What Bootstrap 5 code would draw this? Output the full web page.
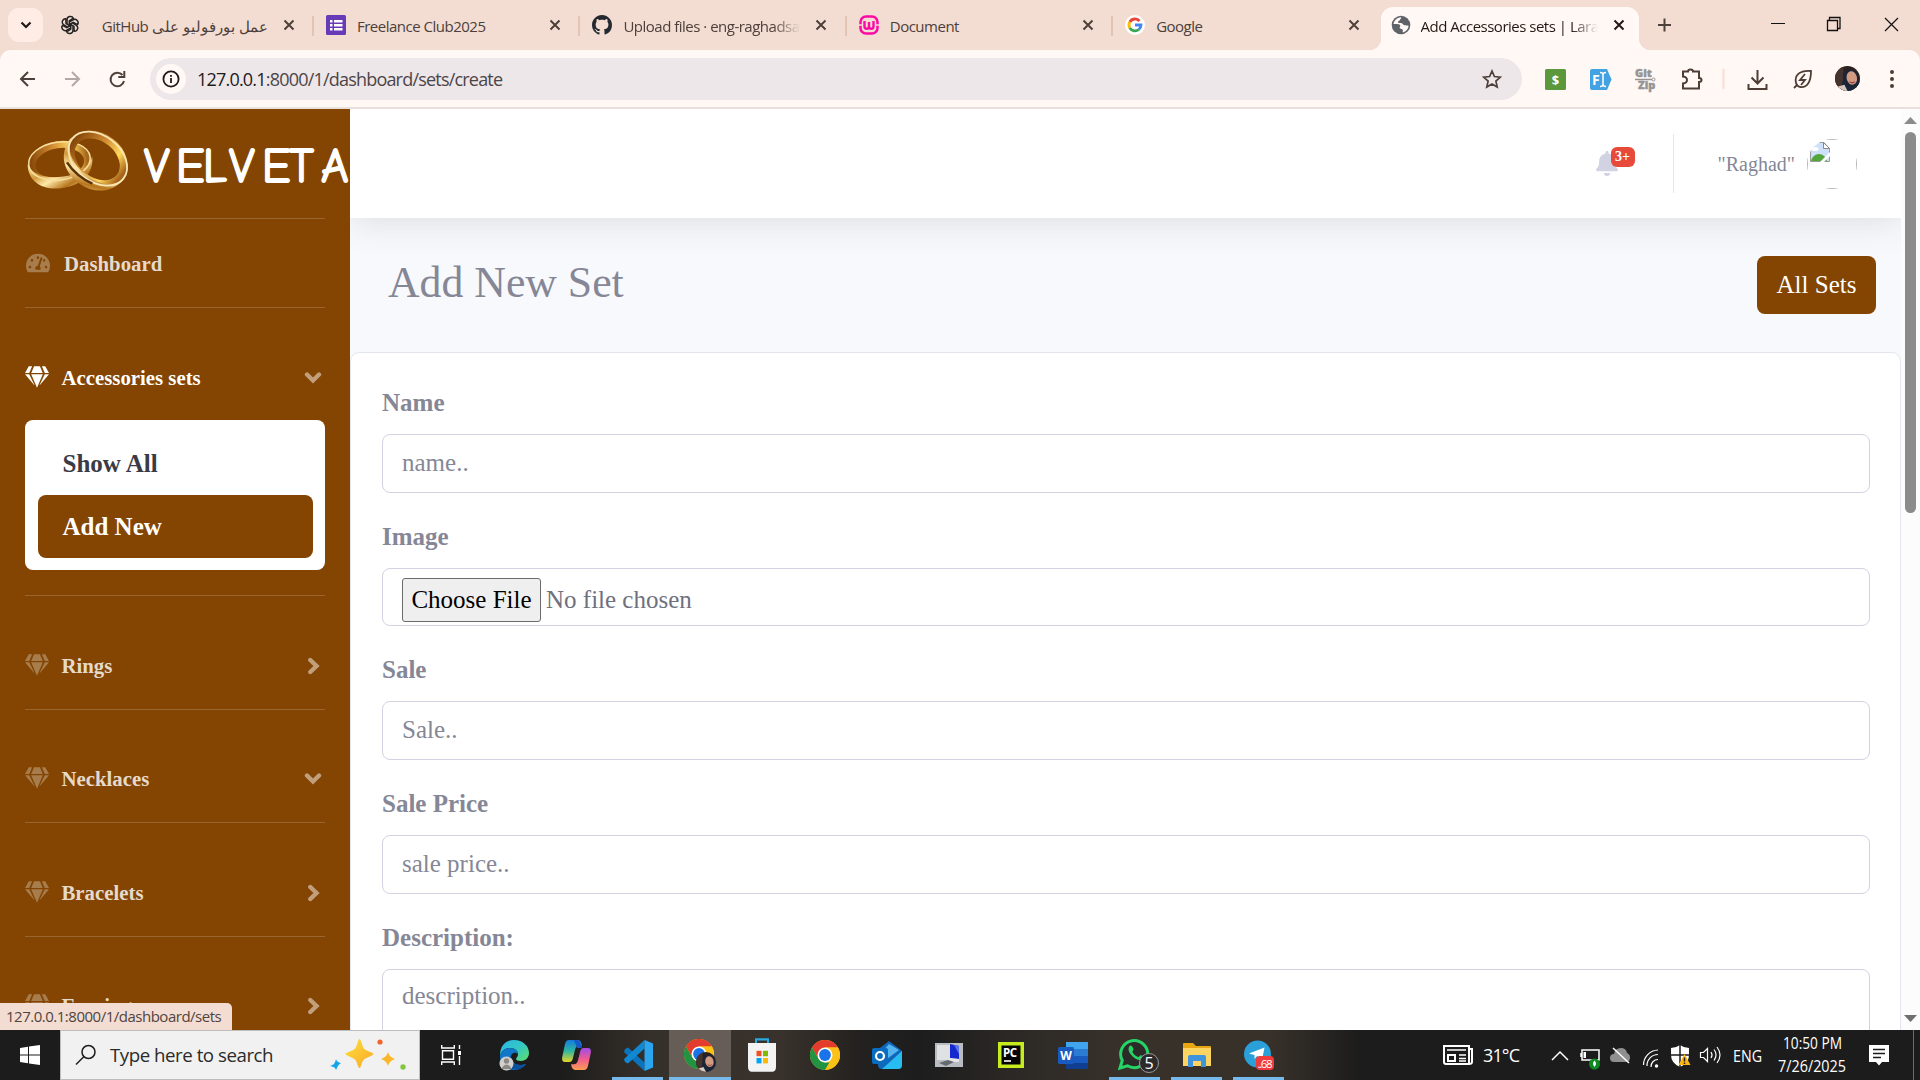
<!DOCTYPE html>
<html lang="en">
<head>
<meta charset="utf-8">
<title>Add Accessories sets | Laravel</title>
<link href="https://cdn.jsdelivr.net/npm/bootstrap@5.3.0/dist/css/bootstrap.min.css" rel="stylesheet">
<style>
:root{--brown:#834501;--ui:"Segoe UI","Open Sans","Noto Sans",sans-serif}
html,body{height:1080px;width:1920px;overflow:hidden}
body{font-family:"Times New Roman","Liberation Serif",serif;font-size:20px;color:#858796;display:flex;flex-direction:column;margin:0}
svg{display:block;flex:none}
.ui{font-family:var(--ui)}
/* browser tabs */
.tabstrip{height:50px;background:#f3ddd2;flex:none;color:#4d403a;font-size:15px;letter-spacing:-.5px}
.tabdrop{width:35px;height:34px;margin:8px 14px 0 8px;border-radius:11px;background:#ffece4}
.btab{width:266.4px;height:50px;padding-left:14px}
.btab .ttl{width:177px;margin-left:11px;white-space:nowrap;overflow:hidden;line-height:22px;padding-top:1px}
.btab .cls{margin-left:15px}
.sep{width:2px;height:20px;background:#e3c4b4;margin-right:-2px}
.fade-r{-webkit-mask-image:linear-gradient(90deg,#000 85%,transparent);mask-image:linear-gradient(90deg,#000 85%,transparent)}
.btab.cur{width:258px;height:43px;background:#fff8f5;border-radius:12px 12px 0 0;margin:7px 0 0 3px;padding-left:10px;color:#241a15;position:relative}
.btab.cur:before,.btab.cur:after{content:"";position:absolute;bottom:0;width:12px;height:12px}
.btab.cur:before{left:-12px;background:radial-gradient(circle at 0 0,transparent 12px,#fff8f5 12.5px)}
.btab.cur:after{right:-12px;background:radial-gradient(circle at 100% 0,transparent 12px,#fff8f5 12.5px)}
.toolbar-wrap{height:59px;background:#f3ddd2;flex:none}
.urlbar{height:59px;background:#fff8f5;border-radius:11px 11px 0 0;border-bottom:2px solid #e9dfdc}
.omni{width:1372px;height:42px;border-radius:21px;background:#ede7e9;padding:0 18px 0 6px;margin-top:1px;font-size:18px;letter-spacing:-.8px;color:#4c4547}
.omni b{font-weight:400;color:#1f1b1c}
.infodot{width:30px;height:30px;border-radius:50%;background:#fff8f5;margin-right:11px}
/* page */
.page{height:921px;flex:none;overflow:hidden;background:#f8f9fc}
.side{width:350px;flex:none;background:var(--brown);overflow:hidden;height:921px}
.brandbox{height:109px}
.rule{height:1px;margin:0 25px;background:#99662f}
.sitem{margin:0 25px;font-weight:700;color:#e6dacc;line-height:30px;height:112.6px;padding-top:54.5px;font-size:20.8px}
.sitem.dash{height:88px;padding-top:30px}
.sitem.on{color:#fff;height:112px}
.sitem svg.ic{color:#a87d4e;width:24px;height:22px;margin-right:12.5px;margin-top:3px}
.sitem.on svg.ic{color:#fff}
.sitem svg.chev{color:#c19f7c;margin:6px 3.5px 0 auto}
.subbox{margin:0 25px 25px;height:150px;background:#fff;border-radius:8px;padding:12px 12px 12px 13px;font-size:25px;font-weight:700}
.subbox .sublink{display:block;height:63px;line-height:63px;padding-left:24.5px;border-radius:8px;text-decoration:none;color:#3a3b45}
.subbox .sublink.on{background:var(--brown);color:#fff}
.topline{height:109px;background:#fff;box-shadow:0 3px 35px rgba(58,59,69,.15);flex:none;position:relative;z-index:1}
.main{width:1551px;overflow:hidden;height:921px}
.vline{width:1px;height:59px;background:#e3e6f0}
.cnt{position:absolute;left:15px;top:-4px;width:24px;height:20px;border-radius:6px;background:#e74a3b;color:#fff;font-size:14px;font-weight:700;line-height:19px;text-align:center}
.headrow{height:134px;padding:38px 25px 0 38px;flex:none}
.headrow h1{font-size:43.75px;line-height:52px;font-weight:400;margin:0}
.allbtn{width:119px;height:58px;border-radius:8px;background:var(--brown);color:#fff;font-size:25px;line-height:58px;text-align:center}
.fcard{background:#fff;border:1px solid #e3e6f0;border-radius:9px;height:760px;padding:31px 30px 0 31px;flex:none}
.fgroup{height:134px}
.fgroup.short{height:133px}
.fgroup label{display:block;font-size:25px;font-weight:700;line-height:37.5px;margin-bottom:12.5px}
.fgroup .form-control{height:59px;font-size:25px;line-height:37.5px;padding:7px 19px 9px;border:1px solid #d1d3e2;border-radius:8px;color:#6e707e;font-family:inherit}
.fgroup textarea.form-control{height:98px;resize:none;overflow:hidden}
.fgroup .form-control::placeholder{color:#858796}
.fgroup .filebox{height:58px;padding:9px 19px 0}
.pick{width:139px;height:44px;border:1px solid #6b6b6b;border-radius:3px;background:#efefef;color:#000;line-height:42px;text-align:center;margin-right:5px}
.sbar{width:19px;background:#fcfcfc;height:921px;padding:8px 0 8px}
.thumb{width:11px;height:381px;border-radius:6px;background:#8b8b8b;margin-top:8px}
.bubble{position:absolute;left:0;top:1003px;width:232px;height:27px;background:#f3ddd2;border-radius:0 5px 0 0;color:#50443f;font-size:15px;line-height:27px;padding-left:6px;letter-spacing:-.49px;z-index:5;white-space:nowrap}
/* taskbar */
.taskbar{height:50px;flex:none;color:#fff;background:linear-gradient(90deg,#1c1c1c 0,#1c1c1c 560px,#36302a 650px,#39322c 780px,#23211f 860px,#1d1d1e 920px,#2b2825 1010px,#38312a 1120px,#38312a 1270px,#1c1c1c 1360px)}
.start{width:60px}
.find{width:360px;height:50px;background:#f1f1f1;border:1px solid #bdbdbd;color:#2b2b2b;font-size:18.7px;letter-spacing:-.47px;padding-left:14px}
.slot{width:62.1px;height:50px;display:flex;align-items:center;justify-content:center;position:relative}
.slot.live:after{content:"";position:absolute;bottom:0;left:5px;right:6px;height:3px;background:#76b9ed}
.slot.cur{background:#655d56}
.slot.cur:after{left:0;right:0}
</style>
<script src="https://cdn.jsdelivr.net/npm/bootstrap@5.3.0/dist/js/bootstrap.bundle.min.js"></script>
</head>
<body>
<svg width="0" height="0" style="position:absolute">
<defs>
<symbol id="gem" viewBox="0 0 576 512"><path fill="currentColor" d="M485.5 0L576 160H474.9L405.7 0h79.8zm-128 0l69.2 160H149.3L218.5 0h139zm-267 0h79.8l-69.2 160H0L90.5 0zM0 192h100.7l123 251.7c1.5 3.1-2.7 5.9-5 3.3L0 192zm148.2 0h279.6l-137 318.2c-1 2.4-4.5 2.4-5.5 0L148.2 192zm204.1 251.7l123-251.7H576L357.3 446.9c-2.3 2.7-6.5-.1-5-3.2z"/></symbol>
<symbol id="cx" viewBox="0 0 12 12"><path d="M1.500 1.500l9 9M10.500 1.500l-9 9" stroke="currentColor" stroke-width="2" fill="none"/></symbol>
<symbol id="cr" viewBox="0 0 18 18"><path d="M6.300 3L12.500 9l-6.200 6" stroke="currentColor" stroke-width="4.400" stroke-linecap="round" fill="none"/></symbol>
<symbol id="cd" viewBox="0 0 18 18"><path d="M3 5.500L9 11.500l6-6" stroke="currentColor" stroke-width="4.400" stroke-linecap="round" fill="none"/></symbol>
<symbol id="chrome" viewBox="0 0 30 30"><circle cx="15" cy="15" r="15" fill="#fbc116"/><path d="M15 15L8.500 18.800 2 7.500A15 15 0 0 1 28 7.500H15z" fill="#e33b2e"/><path d="M2 7.500L8.500 18.700 15 22.500h6.500L15 30A15 15 0 0 1 2 7.500z" fill="#229342"/><path d="M15 30l6.500-11.300L15 15V7.500h13A15 15 0 0 1 15 30z" fill="#fbc116"/><circle cx="15" cy="15" r="7.500" fill="#fff"/><circle cx="15" cy="15" r="5.900" fill="#1a73e8"/></symbol>
<symbol id="face" viewBox="0 0 24 24"><clipPath id="fc"><circle cx="12" cy="12" r="12"/></clipPath><g clip-path="url(#fc)"><path fill="#2c211e" d="M0 0h24v24H0z"/><path fill="#45342d" d="M0 0h8v24H0z"/><path d="M8 8c1-6 11-7 14 1 2 6 3 12 0 15H3c3-3 5-8 5-16z" fill="#1b2538"/><ellipse cx="16" cy="11.500" rx="5" ry="6.500" fill="#d39a82" transform="rotate(-12 16 11)"/><path d="M14 15c2 2 4 1 5 0" stroke="#8d3b3b" fill="none"/><path d="M2 20l7-2 3 6H1z" fill="#d8c9bf"/></g></symbol>
<linearGradient id="gold" x1="0" y1="0" x2="1" y2="1"><stop offset="0" stop-color="#fbe9a6"/><stop offset=".3" stop-color="#d39a3c"/><stop offset=".5" stop-color="#ffe9a8"/><stop offset=".75" stop-color="#b8761d"/><stop offset="1" stop-color="#f7df98"/></linearGradient>
<linearGradient id="goldin" x1="0" y1="0" x2="1" y2="0"><stop offset="0" stop-color="#8a4a0a"/><stop offset=".4" stop-color="#d08a32"/><stop offset=".75" stop-color="#ffd85c"/><stop offset="1" stop-color="#a8641a"/></linearGradient>
<linearGradient id="star" x1="0" y1="0" x2="1" y2="1"><stop offset="0" stop-color="#ffdf3d"/><stop offset="1" stop-color="#f7a928"/></linearGradient>
<linearGradient id="edg" x1="0" y1="0" x2="1" y2="1"><stop offset="0" stop-color="#2bb5e8"/><stop offset=".5" stop-color="#33c8c4"/><stop offset="1" stop-color="#62de68"/></linearGradient>
<linearGradient id="cpA" x1="0" y1="0" x2="0" y2="1"><stop offset="0" stop-color="#147be0"/><stop offset=".5" stop-color="#2fb6a0"/><stop offset="1" stop-color="#e8d327"/></linearGradient>
<linearGradient id="cpB" x1="0" y1="0" x2="0" y2="1"><stop offset="0" stop-color="#a14bea"/><stop offset=".5" stop-color="#ef5c8f"/><stop offset="1" stop-color="#fb9d52"/></linearGradient>
</defs>
</svg>

<header class="ui">
<div class="tabstrip d-flex align-items-start">
  <div class="tabdrop d-flex align-items-center justify-content-center"><svg width="12" height="8" viewBox="0 0 12 8"><path d="M1.500 1.500L6 6l4.500-4.500" stroke="#1f1a18" stroke-width="2.200" fill="none"/></svg></div>
  <div class="btab d-flex align-items-center" style="width:255px;padding-left:4px">
    <svg width="18" height="20" viewBox="-12 -13 24 26" fill="none" stroke="#222" stroke-width="2"><g id="oa"><path d="M-4 -1.500V-7a4.500 4.500 0 0 1 8.500-2L-1 -5.500V1"/></g><use href="#oa" transform="rotate(60)"/><use href="#oa" transform="rotate(120)"/><use href="#oa" transform="rotate(180)"/><use href="#oa" transform="rotate(240)"/><use href="#oa" transform="rotate(300)"/></svg>
    <span class="ttl" dir="rtl" style="width:163px;margin-left:26px;overflow:visible">عمل بورفوليو على GitHub</span>
    <svg class="cls" width="12" height="12"><use href="#cx"/></svg>
  </div>
  <i class="sep mt-3"></i>
  <div class="btab d-flex align-items-center">
    <svg width="20" height="20" viewBox="0 0 20 20"><rect width="20" height="20" rx="1.500" fill="#673ab7"/><path d="M4 5h2.500v2.500H4zM8 5h8.500v2.500H8zM4 9h2.500v2.500H4zM8 9h8.500v2.500H8zM4 13h2.500v2.500H4zM8 13h8.500v2.500H8z" fill="#fff"/></svg>
    <span class="ttl">Freelance Club2025</span><svg class="cls" width="12" height="12"><use href="#cx"/></svg>
  </div>
  <i class="sep mt-3"></i>
  <div class="btab d-flex align-items-center">
    <svg width="20" height="20" viewBox="0 0 16 16"><path fill="#24292f" d="M8 0C3.580 0 0 3.580 0 8c0 3.540 2.290 6.530 5.470 7.590.4.070.55-.17.55-.38 0-.19-.01-.82-.01-1.490-2.010.37-2.530-.49-2.690-.94-.09-.23-.48-.94-.82-1.130-.28-.15-.68-.52-.01-.53.63-.01 1.080.58 1.230.82.72 1.210 1.870.87 2.330.66.07-.52.28-.87.51-1.070-1.780-.2-3.640-.89-3.640-3.950 0-.87.31-1.590.82-2.150-.08-.2-.36-1.020.08-2.120 0 0 .67-.21 2.200.82.64-.18 1.320-.27 2-.27s1.360.09 2 .27c1.530-1.040 2.200-.82 2.200-.82.44 1.100.16 1.920.08 2.120.51.56.82 1.270.82 2.150 0 3.070-1.870 3.750-3.650 3.950.29.25.54.73.54 1.480 0 1.070-.01 1.930-.01 2.200 0 .21.15.46.55.38A8.010 8.010 0 0 0 16 8c0-4.420-3.580-8-8-8"/></svg>
    <span class="ttl fade-r">Upload files · eng-raghadsa</span><svg class="cls" width="12" height="12"><use href="#cx"/></svg>
  </div>
  <i class="sep mt-3"></i>
  <div class="btab d-flex align-items-center">
    <svg width="20" height="20" viewBox="0 0 20 20" fill="none" stroke="#fb0ba4"><rect x="1.500" y="1.500" width="17" height="17" rx="5.500" stroke-width="2.500"/><path d="M5.500 6v5.500a2.200 2.200 0 0 0 4.500 0V7M10 11.500a2.200 2.200 0 0 0 4.500 0V6" stroke-width="2.400"/><path d="M0 10h3M17 10h3" stroke="#f3ddd2" stroke-width="1.500"/></svg>
    <span class="ttl">Document</span><svg class="cls" width="12" height="12"><use href="#cx"/></svg>
  </div>
  <i class="sep mt-3"></i>
  <div class="btab d-flex align-items-center">
    <svg width="20" height="20" viewBox="0 0 20 20" fill="none" stroke-width="2.800"><circle cx="10" cy="10" r="10" fill="#fff"/><path d="M14.500 6A6 6 0 0 0 4.800 7" stroke="#ea4335"/><path d="M4.800 7a6 6 0 0 0 0 6" stroke="#fbbc05"/><path d="M4.800 13a6 6 0 0 0 9 1.500" stroke="#34a853"/><path d="M13.800 14.500A6 6 0 0 0 16 10h-6" stroke="#4285f4"/></svg>
    <span class="ttl">Google</span><svg class="cls" width="12" height="12"><use href="#cx"/></svg>
  </div>
  <div class="btab cur d-flex align-items-center">
    <svg width="20" height="20" viewBox="0 0 20 20" style="margin-top:-7px"><circle cx="10" cy="10" r="9.300" fill="#5f6368"/><path d="M2.500 9c.5-3.500 3.500-6.500 7.500-6.800 1 1-.8 1.600-1.200 2.800-.3 1.200-1.800.7-1.800 2s1.500 1 3 1 1.500 1.500 3 2 4 .3 4.500.8c0 3.200-2.500 6-5.500 6.700-1-.8.500-2-.5-3s-2.500-.5-2.800-1.700c-.3-1.300 1.300-1.500.3-2.800S5 9.500 2.500 9z" fill="#fff8f5"/></svg>
    <span class="ttl fade-r" style="margin-left:10px;margin-top:-7px">Add Accessories sets | Lara</span><svg class="cls" style="margin-top:-7px" width="12" height="12"><use href="#cx"/></svg>
  </div>
  <svg width="281" height="50" viewBox="1639 0 281 50" fill="none" stroke="#4d403a"><path d="M1658 25h13M1664.500 18.500v13" stroke-width="2"/><path d="M1771 23.500h14" stroke="#111"/><path d="M1827.500 20.500h10v10h-10zM1829.500 20v-2.500h10.500v11H1838" stroke="#111" stroke-width="1.300"/><path d="M1885 18l13 13M1898 18l-13 13" stroke="#111" stroke-width="1.200"/></svg>
</div>
<div class="toolbar-wrap"><div class="urlbar d-flex align-items-center">
  <svg width="150" height="42" viewBox="0 58 150 42" fill="none" stroke="#4d403a" stroke-width="2"><path d="M35 79H21M28 72l-7 7 7 7"/><path d="M65 79h14M72 72l7 7-7 7" stroke="#b3a9a4"/><path d="M122.500 75A6.800 6.800 0 1 0 124 81M124.300 71v6h-6"/></svg>
  <div class="omni d-flex align-items-center">
    <div class="infodot d-flex align-items-center justify-content-center"><svg width="18" height="18" viewBox="0 0 18 18" fill="none" stroke="#1f1b1c" stroke-width="1.800"><circle cx="9" cy="9" r="7.600"/><path d="M9 8v5M9 5v1.800"/></svg></div>
    <span class="flex-grow-1"><b>127.0.0.1</b>:8000/1/dashboard/sets/create</span>
    <svg width="20" height="20" viewBox="0 0 20 20" style="margin-right:2px"><path d="M10 2l2.400 5.500 6 .6-4.500 4 1.300 5.900L10 14.900 4.800 18l1.300-5.900-4.500-4 6-.6z" fill="none" stroke="#4d403a" stroke-width="1.700"/></svg>
  </div>
  <svg width="398" height="42" viewBox="1522 58 398 42" font-family="Open Sans,sans-serif">
    <rect x="1545" y="69" width="21" height="21" rx="1.500" fill="#5b983b"/><text x="1555.500" y="84.500" font-size="13" font-weight="700" fill="#fff" text-anchor="middle">$</text>
    <path d="M1592 69h15l4.500 10.500-4.500 10.500h-15q-2 0-2-2V71q0-2 2-2z" fill="#42a2e2"/><text x="1592" y="85" font-size="14" font-weight="700" fill="#fff">F</text><path d="M1600 72.500q3 0 3 2 0-2 3-2M1603 74v11M1600 86.500q3 0 3-2 0 2 3 2" stroke="#fff" stroke-width="1.500" fill="none"/>
    <g font-size="11" font-weight="800" fill="#949494" stroke="#949494" stroke-width=".4"><text x="1635" y="77">Git</text><text x="1638" y="89">Zip</text></g><path d="M1635 79.500h17" stroke="#949494" stroke-width="1.500"/><circle cx="1653.500" cy="79.500" r="1.500" fill="none" stroke="#949494"/>
    <path d="M1683 71.500h5q0-2 2.500-2t2.500 2h6v6.500q2.500 0 2.500 2t-2.500 2v6.500h-16v-5q4-.5 4-3.500t-4-3.500z" fill="none" stroke="#4d3d34" stroke-width="2"/>
    <path d="M1723.500 69v20" stroke="#fadcd0" stroke-width="2"/>
    <path d="M1757.500 70v13M1751.500 77.500l6 6 6-6M1748.500 84v5h18v-5" fill="none" stroke="#4d3d34" stroke-width="2"/>
    <path d="M1794 88l3-3M1796 83c-2-8 4-13 15-12 0 11-4 17-11 16-3-1-3.500-2-4-4zM1805 74l-5 6h5l-4 5" fill="none" stroke="#4d3d34" stroke-width="1.800"/>
    <use href="#face" x="1835" y="66" width="25" height="25"/>
    <g fill="#4d3d34"><circle cx="1892" cy="72" r="2"/><circle cx="1892" cy="79" r="2"/><circle cx="1892" cy="86" r="2"/></g>
  </svg>
</div></div>
</header>

<div class="page d-flex">
<nav class="side">
  <div class="brandbox"><svg width="350" height="109" viewBox="0 109 350 109">
    <g fill="none">
      <g transform="rotate(-8 60 165)"><ellipse cx="60" cy="163" rx="28" ry="18.500" stroke="url(#goldin)" stroke-width="7"/><path d="M28 160c-2 19 14 29 33 28 18 0 32-11 32-27-3 9-14 16-31 16-17 0-31-6-34-17z" fill="url(#gold)"/><ellipse cx="60" cy="161" rx="31" ry="19" stroke="#f6e0a0" stroke-width="1.500"/></g>
      <g transform="rotate(38 96 161)"><ellipse cx="96" cy="159" rx="29" ry="22" stroke="url(#goldin)" stroke-width="8"/><path d="M62 157c-1 21 15 33 35 32 19-1 32-14 32-31-3 12-15 20-32 20-18 0-32-8-35-21z" fill="url(#gold)"/><ellipse cx="96" cy="158" rx="32.500" ry="23" stroke="#f8e7b4" stroke-width="1.800"/><path d="M74 180c12 4 22 4 33 1" stroke="#5b3308" stroke-width="2.500"/></g>
    </g>
    <text y="182" x="144 176 203 229 262 289 321" font-family="'Comic Sans MS','Comic Neue',Lato,sans-serif" font-size="47.500" fill="#fff" stroke="#fff" stroke-width="1.800" stroke-linejoin="round">VELVETA</text>
  </svg></div>
  <div class="rule"></div>
  <div class="sitem dash d-flex"><svg class="ic" style="margin-right:14px;margin-left:1px;margin-top:3px" viewBox="0 0 576 512"><path fill="currentColor" d="M288 32C128.940 32 0 160.940 0 320c0 52.800 14.250 102.260 39.060 144.800 5.610 9.620 16.300 15.200 27.440 15.200h443c11.140 0 21.830-5.580 27.440-15.200C561.750 422.260 576 372.800 576 320c0-159.060-128.940-288-288-288zm0 64c14.710 0 26.580 10.130 30.320 23.650-1.110 2.260-2.640 4.230-3.450 6.670l-9.220 27.670c-5.130 3.490-10.970 6.010-17.640 6.010-17.670 0-32-14.330-32-32S270.330 96 288 96zM96 384c-17.670 0-32-14.330-32-32s14.330-32 32-32 32 14.330 32 32-14.330 32-32 32zm48-160c-17.670 0-32-14.330-32-32s14.330-32 32-32 32 14.330 32 32-14.330 32-32 32zm246.770-72.410l-61.330 184C343.130 347.330 352 364.540 352 384c0 11.720-3.380 22.550-8.880 32H232.880c-5.500-9.450-8.880-20.280-8.880-32 0-33.940 26.500-61.430 59.900-63.590l61.340-184.010c4.170-12.560 17.730-19.450 30.360-15.170 12.570 4.190 19.350 17.790 15.170 30.360zm14.660 57.200l15.520-46.550c3.470-1.290 7.130-2.230 11.050-2.230 17.670 0 32 14.330 32 32s-14.330 32-32 32c-11.380-.01-20.890-6.280-26.570-15.220zM480 384c-17.670 0-32-14.330-32-32s14.330-32 32-32 32 14.330 32 32-14.330 32-32 32z"/></svg>Dashboard</div>
  <div class="rule"></div>
  <div class="sitem on d-flex"><svg class="ic"><use href="#gem"/></svg>Accessories sets<svg class="chev" width="18" height="18"><use href="#cd"/></svg></div>
  <div class="subbox"><a class="sublink">Show All</a><a class="sublink on">Add New</a></div>
  <div class="rule"></div>
  <div class="sitem d-flex"><svg class="ic"><use href="#gem"/></svg>Rings<svg class="chev" width="18" height="18"><use href="#cr"/></svg></div>
  <div class="rule"></div>
  <div class="sitem d-flex"><svg class="ic"><use href="#gem"/></svg>Necklaces<svg class="chev" width="18" height="18"><use href="#cd"/></svg></div>
  <div class="rule"></div>
  <div class="sitem d-flex"><svg class="ic"><use href="#gem"/></svg>Bracelets<svg class="chev" width="18" height="18"><use href="#cr"/></svg></div>
  <div class="rule"></div>
  <div class="sitem d-flex"><svg class="ic"><use href="#gem"/></svg>Earrings<svg class="chev" width="18" height="18"><use href="#cr"/></svg></div>
</nav>
<main class="main d-flex flex-column">
  <div class="topline d-flex align-items-center justify-content-end">
    <div class="position-relative" style="margin-right:55px"><svg width="22" height="25" viewBox="0 0 448 512"><path fill="#d1d3e2" d="M224 512c35.320 0 63.970-28.650 63.970-64H160.030c0 35.350 28.650 64 63.970 64zm215.390-149.710c-19.320-20.760-55.470-51.990-55.470-154.290 0-77.700-54.480-139.900-127.940-155.160V32c0-17.670-14.320-32-31.980-32s-31.980 14.330-31.980 32v20.840C118.560 68.100 64.080 130.300 64.080 208c0 102.300-36.150 133.530-55.470 154.290-6 6.450-8.660 14.160-8.610 21.710.11 16.400 12.980 32 32.100 32h383.800c19.120 0 32-15.600 32.100-32 .05-7.550-2.610-15.270-8.610-21.710z"/></svg><span class="cnt">3+</span></div>
    <div class="vline"></div>
    <span style="margin:0 12px 0 44px">"Raghad"</span>
    <svg width="50" height="50" viewBox="0 0 50 50" style="margin-right:44px"><clipPath id="rc"><circle cx="25" cy="25" r="25"/></clipPath><g clip-path="url(#rc)"><path d="M.5.500h49v49H.5z" fill="none" stroke="#b5b5b5"/><path d="M3.500 3.500H17l5.500 6v13h-19z" fill="#cfe0fb" stroke="#9a9a9a"/><path d="M16.500 3.500v6h6z" fill="#fff" stroke="#8a8a8a"/><ellipse cx="8" cy="10" rx="3.500" ry="2" fill="#fff"/><path d="M4 22c1-4 4-7 8-7s7 3 8 7z" fill="#53a63c"/><path d="M13 23l10-10v4l-6 6z" fill="#fff"/></g></svg>
  </div>
  <div class="headrow d-flex justify-content-between"><h1>Add New Set</h1><a class="allbtn text-decoration-none">All Sets</a></div>
  <form class="fcard">
    <div class="fgroup"><label>Name</label><input class="form-control" placeholder="name.."></div>
    <div class="fgroup short"><label>Image</label><div class="form-control filebox d-flex"><span class="pick">Choose File</span><span style="line-height:43px">No file chosen</span></div></div>
    <div class="fgroup"><label>Sale</label><input class="form-control" placeholder="Sale.."></div>
    <div class="fgroup"><label>Sale Price</label><input class="form-control" placeholder="sale price.."></div>
    <div class="fgroup"><label>Description:</label><textarea class="form-control" placeholder="description.."></textarea></div>
  </form>
</main>
<div class="sbar d-flex flex-column align-items-center">
  <svg width="13" height="7" viewBox="0 0 13 7"><path d="M0 7l6.500-7L13 7z" fill="#8b8b8b"/></svg>
  <div class="thumb"></div>
  <svg class="mt-auto" width="13" height="7" viewBox="0 0 13 7"><path d="M0 0l6.500 7L13 0z" fill="#6f6f6f"/></svg>
</div>
</div>
<div class="bubble ui">127.0.0.1:8000/1/dashboard/sets</div>

<footer class="taskbar ui d-flex align-items-center">
  <div class="start d-flex justify-content-center"><svg width="20" height="20" viewBox="0 0 20 20"><path fill="#fff" d="M0 3l8-1.200v7.700H0zM9 1.600L20 0v9.500H9zM0 10.500h8v7.700L0 17zM9 10.500h11V20L9 18.400z"/></svg></div>
  <div class="find d-flex align-items-center"><svg width="22" height="22" viewBox="0 0 22 22" fill="none" stroke="#1c1c1c" stroke-width="1.500"><circle cx="13.500" cy="8" r="6.500"/><path d="M9 12.500L1 20.500"/></svg><span style="margin-left:13px;width:217px">Type here to search</span>
    <svg width="80" height="40" viewBox="328 1035 80 40"><path d="M360.500 1039c1.500 0 2.500 6 4 9s10 4.500 10 6-8 3.500-10 6-2.500 8-4 8-2.500-6-4-8-10-4.500-10-6 8-3 10-6 2.500-9 4-9z" fill="url(#star)"/><path d="M389 1052c1 3 2 5 7 7-5 2-6 4-7 7-1-3-2-5-7-7 5-2 6-4 7-7z" fill="#fbb72b"/><path d="M337 1059c1 3 2 3 5 4-3 2-3 3-5 7-1-3-2-3-6-4 4-1 5-3 6-7z" fill="#12a5ec"/><circle cx="381" cy="1042" r="2.600" fill="#f0642d"/><circle cx="404" cy="1067" r="2.700" fill="#85c440"/></svg></div>
  <div class="slot" style="width:61px"><svg width="20" height="20" viewBox="0 0 20 20" fill="none" stroke="#fff" stroke-width="1.400"><path d="M.7 0v3h12.600V0M.7 20v-3h12.600v3M1.500 5.700h11v8.600h-11zM18.500 0v4M18.500 11v9"/><path d="M18.500 6v4" stroke-width="3"/></svg></div>
  <div class="slot" style="margin-left:2px"><svg width="32" height="32" viewBox="0 0 32 32"><path d="M2 17C2 6 8 1 16 1c9 0 15 6 15 13 0 5-4 8-8 8-3 0-5-1-5-2s2-2 2-5-3-6-8-6S3 12 2 17z" fill="url(#edg)"/><path d="M2 17c1-5 5-8 10-8 5 0 8 3 8 6-2-2-6-2-7 2-1 7 6 11 15 8-3 4-8 6-12 6C8 31 2 26 2 17z" fill="#1177c9"/><path d="M13 17c-1 7 6 11 15 8-4 6-12 7-16 4-3-3-3-9 1-12z" fill="#0c51a0"/><circle cx="8.500" cy="24.500" r="7" fill="#d2d0ce"/><circle cx="8.500" cy="22" r="2.700" fill="#8c8885"/><path d="M4 28.500q4.500-6 9 0v1.500H4z" fill="#8c8885"/></svg></div>
  <div class="slot"><svg width="29" height="30" viewBox="0 0 29 26" preserveAspectRatio="none"><path d="M7 0h9q2.500 0 3.300 2.500L20 5h-3q-3 0-4 3.500l-2.300 8Q10 19 8 19H3q-3.500 0-2.800-4L3 3.500Q4 0 7 0z" fill="url(#cpA)"/><path d="M22 26h-9q-2.500 0-3.300-2.500L9 21h3q3 0 4-3.500l2.300-8Q19 7 21 7h5q3.500 0 2.800 4L26 22.500Q25 26 22 26z" fill="url(#cpB)"/><path d="M15 0q2.500 0 3.300 2.500L20 7h-5l-3-7z" fill="#1659c7"/></svg></div>
  <div class="slot live"><svg width="31" height="31" viewBox="0 0 31 31" style="margin-right:1px"><path d="M3 9l3-1.500 16.500 15V31L2 12z" fill="#0b74bd"/><path d="M3 22l3 1.500L22.500 8.500V0L2 19z" fill="#1188d2"/><path d="M22.500 0L31 3.500v24L22.500 31z" fill="#2ca5ef"/></svg></div>
  <div class="slot live cur"><svg width="34" height="34" viewBox="0 0 34 34"><use href="#chrome" x="1" y="1" width="30" height="30"/><use href="#face" x="13" y="14" width="20" height="20"/></svg></div>
  <div class="slot"><svg width="30" height="36" viewBox="0 0 30 30" preserveAspectRatio="none"><path d="M9 7V2h12v5" fill="none" stroke="#29a9e0" stroke-width="2"/><path d="M1 5h28v20q0 4-4 4H5q-4 0-4-4z" fill="#f3f3f3"/><path d="M9.500 11.500h5v4.500h-5z" fill="#f25022"/><path d="M16 11.500h5v4.500h-5z" fill="#7fba00"/><path d="M9.500 17.500h5v4.500h-5z" fill="#00a4ef"/><path d="M16 17.500h5v4.500h-5z" fill="#ffb900"/></svg></div>
  <div class="slot"><svg width="30" height="30"><use href="#chrome" width="30" height="30"/></svg></div>
  <div class="slot"><svg width="30" height="28" viewBox="0 0 30 28"><path d="M4 10L17 0l13 10v14q0 4-4 4H10q-4 0-4-4z" fill="#1066b8"/><path d="M17 3l10 6-12 9-6-6z" fill="#54b4ef"/><path d="M30 10v14q0 4-4 4H10L30 10z" fill="#28bdf0"/><rect y="7" width="16" height="16" rx="2" fill="#0a6cbf"/><circle cx="8" cy="15" r="4" fill="none" stroke="#fff" stroke-width="2.200"/></svg></div>
  <div class="slot"><svg width="28" height="24" viewBox="0 0 28 24"><path d="M0 0h28v24H0z" fill="#b9bcc0"/><path d="M2 2h15v15H2z" fill="#dfe1e2"/><path d="M15 1l9 2v13l-9-1z" fill="#1428cf"/><path d="M19 2l5 1v8z" fill="#5a74e8"/><path d="M13 15l11 1v3l-11 0z" fill="#e5e5e5"/><path d="M4 20l9-3 6 2-8 4z" fill="#636a70"/></svg></div>
  <div class="slot"><svg width="26" height="26" viewBox="0 0 26 26"><path d="M0 0h26v26H0z" fill="#c6ec1f"/><path d="M3.500 3.500h19v19h-19z" fill="#050505"/><text x="5" y="14.500" font-family="Open Sans" font-weight="700" font-size="11.500" fill="#fff" textLength="14">PC</text><path d="M6 19h7" stroke="#fff" stroke-width="1.600"/></svg></div>
  <div class="slot"><svg width="30" height="27" viewBox="0 0 30 27"><path d="M8 0h22v7H8z" fill="#41a5ee"/><path d="M8 7h22v7H8z" fill="#2b7cd3"/><path d="M8 14h22v7H8z" fill="#185abd"/><path d="M8 21h22v6H8z" fill="#103f91"/><rect y="5" width="16" height="17" rx="1.500" fill="#185abd"/><text x="8" y="18" font-family="Open Sans" font-weight="700" font-size="12" fill="#fff" text-anchor="middle">W</text></svg></div>
  <div class="slot live"><svg width="42" height="36" viewBox="0 0 42 36" style="margin-left:9px"><path d="M2 31l2.300-7.500A13.500 13.500 0 1 1 9.500 28.800z" fill="#2b2b28" stroke="#25d366" stroke-width="3"/><path d="M11 10c2-3 3-1 4.500 2 .5 1-1.500 2-1 3 1 2 3 4 5.500 5 1 .3 2-2 3-1.700 4 1.700 3.500 2.400 2 4-4 4-17-6-14-12.300z" fill="#25d366"/><circle cx="31" cy="26" r="9.500" fill="#2b2b2b" stroke="#9a9a9a"/><text x="31" y="31.500" font-family="Open Sans" font-size="16" fill="#fff" text-anchor="middle">5</text></svg></div>
  <div class="slot live"><svg width="28" height="24" viewBox="0 0 28 24"><path d="M0 1q0-1 1-1h9l3 3h14q1 0 1 1v19H0z" fill="#e8a712"/><path d="M0 5h28v18H0z" fill="#fcd462"/><path d="M5 24V14q0-2 2-2h14q2 0 2 2v10h-5v-6h-8v6z" fill="#3e94dd"/></svg></div>
  <div class="slot live"><svg width="32" height="34" viewBox="0 0 32 34"><circle cx="14.500" cy="16" r="13.500" fill="#2a9fd8"/><path d="M6 15.500L21.500 9.500 19 22l-5-4-2.500 3v-4z" fill="#fff"/><rect x="13" y="18" width="18" height="14" rx="4" fill="#ee3b3b"/><text x="22" y="29.500" font-family="Open Sans" font-size="11.500" fill="#fff" text-anchor="middle" textLength="15">..68</text></svg></div>
  <svg class="ms-auto" width="471" height="50" viewBox="1443 1030 471 50" fill="none" stroke="#fff" stroke-width="1.500">
    <path d="M1444 1046h25v18h-23q-2 0-2-2zM1469 1049h3v13q0 2-3 2" stroke-width="2"/><path d="M1447 1050h19M1459 1055h7M1459 1058.500h7M1459 1061h7" stroke-width="1.600"/><path d="M1448 1055h7v6h-7z" stroke-width="2"/>
    <path d="M1552 1060l8-8 8 8"/>
    <path d="M1582 1050h17v10h-17zM1581 1053v4"/><path d="M1583.500 1052h2.500v6h-2.500z" fill="#fff" stroke="none"/><circle cx="1594.500" cy="1064" r="5.500" fill="#0d8a22" stroke="none"/><path d="M1594.500 1060.500q3 3 0 6.500-3-3.500 0-6.500z" fill="#fff" stroke="none"/>
    <path d="M1614 1062q-4 0-4-4t4-4q1-6 7-6 5 0 6 5 3 1 3 4.500t-3 4.500z" fill="#8f8f8f" stroke="none"/><path d="M1613 1048l16 15"/>
    <g stroke-width="1.200"><path d="M1643.500 1065a15 15 0 0 1 14.500-15M1647 1066a11 11 0 0 1 11-11.500M1651 1067a7 7 0 0 1 7-7.500"/></g><circle cx="1656.500" cy="1066" r="1.700" fill="#fff" stroke="none"/>
    <path d="M1680 1045q4 3 9 3v7q0 8-9 12-9-4-9-12v-7q5 0 9-3z" fill="#fff" stroke="none"/><path d="M1680 1045v22M1671 1055h18" stroke="#1c1c1c"/><path d="M1684.500 1054l6 11h-12z" fill="#fdb813" stroke="none"/><path d="M1684.500 1057.500v4M1684.500 1062.500v1.500" stroke="#222"/>
    <path d="M1700.500 1052.500h3l4-4v13l-4-4h-3zM1711 1052q2 3 0 6M1714 1049.500q4 5 0 11M1717 1047q6 8 0 16" stroke-width="1.200"/>
    <path d="M1869 1045h20v17h-7l-3 3.500-3-3.500h-7z" fill="#fff" stroke="none"/><path d="M1873 1049.500h12M1873 1053.500h12M1873 1057.500h8" stroke="#1c1c1c"/>
    <g fill="#fff" stroke="none" font-family="Segoe UI,Open Sans,Noto Sans,sans-serif"><text x="1483" y="1061.500" font-size="18" textLength="37">31°C</text><text x="1733" y="1061.500" font-size="16.500" textLength="29" lengthAdjust="spacingAndGlyphs">ENG</text><text x="1783" y="1049" font-size="15.500" textLength="59" lengthAdjust="spacingAndGlyphs">10:50 PM</text><text x="1778" y="1072" font-size="15.500" textLength="68" lengthAdjust="spacingAndGlyphs">7/26/2025</text></g>
    <path d="M1913.500 1030v50" stroke="#6a6a6a" stroke-width="1"/>
  </svg>
  <div style="width:6px"></div>
</footer>
</body>
</html>
